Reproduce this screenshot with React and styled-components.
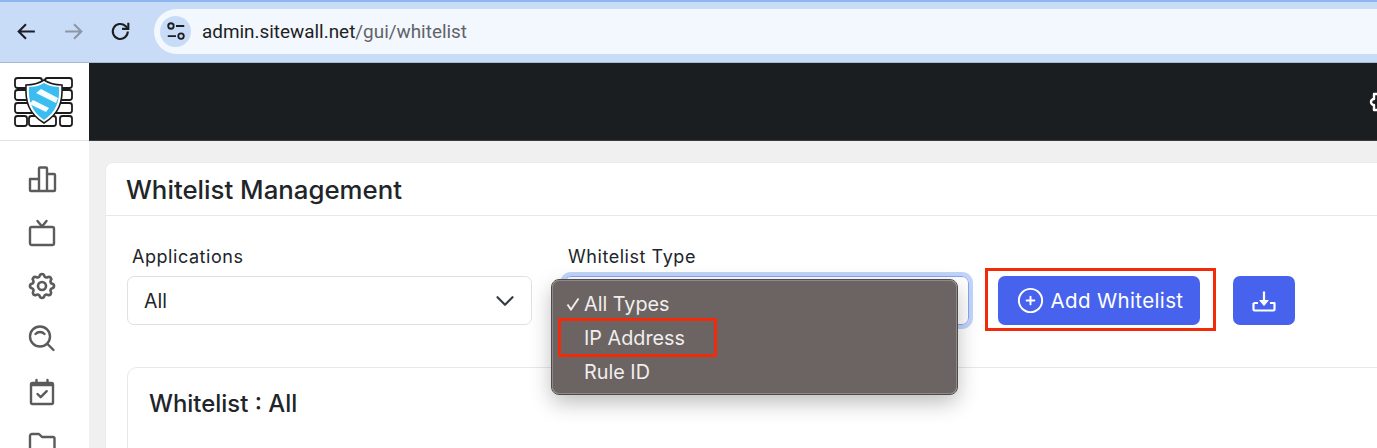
import React from "react";
import styled, { createGlobalStyle } from "styled-components";
import { TbSettings, TbCirclePlus, TbChevronDown } from "react-icons/tb";

const Global = createGlobalStyle`
  html, body { margin: 0; padding: 0; height: 448px; overflow: hidden; background: #fff; }
  * { box-sizing: border-box; }
  body { font-family: Inter, "Liberation Sans", sans-serif; color: #212529; }
`;

const Page = styled.div`
  width: 1377px;
  height: 448px;
  overflow: hidden;
  display: flex;
  flex-direction: column;
  position: relative;
`;

const BrowserBar = styled.div`
  height: 63px;
  flex: none;
  background: #c8dcf8;
  border-top: 2px solid #8fb6ee;
  border-bottom: 1px solid #a9b9d2;
  display: flex;
  align-items: center;
  padding-left: 14px;
  padding-bottom: 2px;
`;

const NavButton = styled.div`
  width: 25px;
  height: 25px;
  margin-right: ${(p) => p.$gap}px;
  color: ${(p) => (p.$muted ? "#8c96a6" : "#1c1e21")};
  display: flex;
`;

const UrlBar = styled.div`
  flex: 1;
  height: 45px;
  margin-right: -30px;
  border-radius: 23px;
  background: #f3f7fe;
  display: flex;
  align-items: center;
  padding-left: 6px;
  font-family: Roboto, Inter, sans-serif;
  font-size: 18.9px;
`;

const TuneBadge = styled.div`
  width: 31px;
  height: 31px;
  border-radius: 50%;
  background: #c8dcf8;
  color: #1c1e21;
  display: flex;
  align-items: center;
  justify-content: center;
  margin-right: 11px;
`;

const Host = styled.span`
  color: #1d1f22;
`;
const UrlPath = styled.span`
  color: #5f6368;
`;

const TopRow = styled.div`
  height: 78px;
  flex: none;
  display: flex;
`;

const LogoBox = styled.div`
  width: 89px;
  flex: none;
  background: #fff;
  border-bottom: 1px solid #e3e3e3;
  display: flex;
  align-items: center;
  justify-content: center;
  padding-right: 2px;
`;

const Navbar = styled.div`
  flex: 1;
  background: #1a1e21;
  border-bottom: 1px solid #3a3c3e;
  display: flex;
  align-items: center;
  justify-content: flex-end;
  color: #fff;
  overflow: hidden;
`;

const CornerIcon = styled.svg`
  width: 24px;
  height: 24px;
  flex: none;
  margin-right: -16px;
`;

const Body = styled.div`
  flex: 1;
  display: flex;
  min-height: 0;
`;

const Sidebar = styled.div`
  width: 89px;
  flex: none;
  background: #fff;
  display: flex;
  flex-direction: column;
  align-items: center;
  padding: 19px 6px 0 0;
  gap: 13px;
  color: #5b5b5b;
`;

const SideIcon = styled.div`
  width: 40px;
  height: 40px;
  display: flex;
  align-items: center;
  justify-content: center;
  flex: none;
`;

const Main = styled.div`
  flex: 1;
  background: #f0f0f0;
  padding: 21px 0 0 16px;
  min-width: 0;
`;

const Card = styled.div`
  width: 1400px;
  height: 400px;
  background: #fff;
  border: 1px solid #e9ebee;
  border-radius: 8px;
`;

const CardHeader = styled.div`
  height: 53px;
  border-bottom: 1px solid #e6e8ec;
  padding: 9px 0 0 20px;
`;

const Title = styled.h1`
  margin: 0;
  font-size: 25.8px;
  line-height: 36px;
  font-weight: 500;
  color: #212529;
`;

const CardBody = styled.div`
  padding: 28px 0 0 21px;
`;

const Form = styled.div`
  display: flex;
  align-items: flex-end;
`;

const Field = styled.div`
  width: 405px;
  margin-right: ${(p) => p.$gap}px;
  display: flex;
  flex-direction: column;
`;

const Label = styled.label`
  font-size: 18px;
  line-height: 26px;
  letter-spacing: 0.55px;
  padding-left: ${(p) => p.$inset}px;
  margin-bottom: 6px;
  color: #212529;
`;

const Select = styled.div`
  height: 49px;
  border: 1px solid #dee2e6;
  border-radius: 7px;
  background: #fff;
  display: flex;
  align-items: center;
  justify-content: space-between;
  padding: 0 11px 0 16px;
  font-size: 19.5px;
  outline: ${(p) => (p.$focus ? "4px solid #c1d5fb" : "none")};
  border-color: ${(p) => (p.$focus ? "#86a5f5" : "#dee2e6")};
  color: #212529;
`;

const PrimaryButton = styled.div`
  height: 49px;
  background: #4763ee;
  color: #fff;
  border-radius: 7px;
  display: flex;
  align-items: center;
  justify-content: center;
  gap: 5px;
  font-size: 20.5px;
  letter-spacing: 0.35px;
  width: ${(p) => p.$w}px;
  margin-right: ${(p) => p.$gap || 0}px;
  flex: none;
`;

const InnerCard = styled.div`
  margin-top: 42px;
  width: 1300px;
  height: 200px;
  border: 1px solid #e6e8ec;
  border-radius: 10px;
  padding: 18px 0 0 21px;
`;

const InnerTitle = styled.h2`
  margin: 0;
  font-size: 23.9px;
  line-height: 36px;
  font-weight: 500;
  color: #212529;
`;

const Menu = styled.div`
  position: absolute;
  left: 552px;
  top: 280px;
  width: 405px;
  height: 114px;
  padding: 6px 0 0 13px;
  background: #6b6462;
  border: 1px solid #8e8a88;
  outline: 1px solid #4f4b4a;
  border-radius: 7px;
  box-shadow: 0 8px 22px rgba(0, 0, 0, 0.28);
  color: #f1eeed;
  font-size: 19.8px;
`;

const MenuItem = styled.div`
  height: 34px;
  display: flex;
  align-items: center;
`;

const Check = styled.span`
  width: 18px;
  flex: none;
  display: flex;
  align-items: center;
`;

const RedBox = styled.div`
  position: absolute;
  left: ${(p) => p.$x}px;
  top: ${(p) => p.$y}px;
  width: ${(p) => p.$w}px;
  height: ${(p) => p.$h}px;
  border: 3px solid #f32a0a;
  pointer-events: none;
`;

const Logo = () => (
  <svg width="60" height="52" viewBox="0 0 60 52">
    <g fill="#fff" stroke="#1b1b1b" strokeWidth="1.8">
      <rect x="1" y="2" width="27" height="10" rx="2.5" />
      <rect x="31" y="2" width="27" height="10" rx="2.5" />
      <rect x="1" y="14" width="14" height="10" rx="2.5" />
      <rect x="44" y="14" width="14" height="10" rx="2.5" />
      <rect x="1" y="27" width="27" height="10" rx="2.5" />
      <rect x="31" y="27" width="27" height="10" rx="2.5" />
      <rect x="1" y="40" width="12" height="10" rx="2.5" />
      <rect x="15" y="40" width="27" height="10" rx="2.5" />
      <rect x="46" y="40" width="12" height="10" rx="2.5" />
    </g>
    <path d="M30 4 C36 8 42 9 48 9 C49 26 45 38 30 47 C15 38 11 26 12 9 C18 9 24 8 30 4 Z" fill="#fff" stroke="#1b1b1b" strokeWidth="1.6" />
    <path d="M30 7 C35 10 41 11 45 11 C46 25 42 36 30 44 C18 36 14 25 15 11 C20 11 25 10 30 7 Z" fill="#3bbdf0" />
    <path d="M22 17 L27 13 L44 22 L42 27 Z M15.500 28 L19 24 L35 32 L32 36 Z" fill="#fff" opacity="0.95" />
  </svg>
);

const ArrowLeft = () => (
  <svg viewBox="0 0 24 24" width="25" height="25" fill="none" stroke="currentColor" strokeWidth="2">
    <path d="M20 12H5M11.5 5l-7 7 7 7" />
  </svg>
);
const ArrowRight = () => (
  <svg viewBox="0 0 24 24" width="25" height="25" fill="none" stroke="currentColor" strokeWidth="2">
    <path d="M4 12h15M12.5 5l7 7-7 7" />
  </svg>
);
const Reload = () => (
  <svg viewBox="0 0 24 24" width="25" height="25" fill="none" stroke="currentColor" strokeWidth="2">
    <path d="M19 12a7.2 7.2 0 1 1-2.2-5.2L19 9" />
    <path d="M19.5 3.5V9.5H13.5" fill="none" />
  </svg>
);
const Tune = () => (
  <svg viewBox="0 0 24 24" width="22" height="22" fill="none" stroke="currentColor" strokeWidth="2">
    <circle cx="6.5" cy="6.5" r="3" />
    <path d="M12 6.5h9M3 17.5h9" />
    <circle cx="17.5" cy="17.5" r="3" />
  </svg>
);

const iconProps = { width: 30, height: 30, viewBox: "0 0 30 30", fill: "none", stroke: "currentColor", strokeWidth: 2.4, strokeLinejoin: "round", strokeLinecap: "round" };

const BarsIcon = () => (
  <svg {...iconProps}>
    <path d="M3 14h9v12H4a1 1 0 0 1-1-1zM12 3.500a1 1 0 0 1 1-1h6a1 1 0 0 1 1 1V26h-8zM20 9h7a1 1 0 0 1 1 1v15a1 1 0 0 1-1 1h-7z" />
  </svg>
);
const TvIcon = () => (
  <svg {...iconProps}>
    <rect x="3" y="9" width="24" height="18" rx="1.800" />
    <path d="M10.500 3l4.500 5.500L19.500 3" />
  </svg>
);
const SearchIcon = () => (
  <svg {...iconProps}>
    <circle cx="13" cy="12.500" r="10" />
    <path d="M8.500 10c2.500-2.600 6.500-2.600 9 0M20.500 20l6 6" />
  </svg>
);
const CalendarIcon = () => (
  <svg {...iconProps}>
    <rect x="4" y="6" width="22" height="21" rx="1.500" />
    <path d="M4 7.500h22" strokeWidth="3.500" strokeLinecap="butt" />
    <path d="M9.500 3v3M20.500 3v3" />
    <path d="M10.500 17l3.200 3.200 6-6" />
  </svg>
);
const FolderIcon = () => (
  <svg {...iconProps}>
    <path d="M3 6a2 2 0 0 1 2-2h7l3 3h11a1.500 1.500 0 0 1 1.500 1.500V26a1.500 1.500 0 0 1-1.500 1.500H4.500A1.500 1.500 0 0 1 3 26z" />
  </svg>
);
const DownloadIcon = () => (
  <svg width="26" height="26" viewBox="0 0 26 26" fill="none" stroke="currentColor" strokeWidth="2.200" strokeLinejoin="round">
    <path d="M2.500 15v6.500a1 1 0 0 0 1 1h19a1 1 0 0 0 1-1V15H19M7 15H2.500" />
    <path d="M13 3.500V14" />
    <path d="M8.800 12.500h8.400L13 17.500z" fill="currentColor" strokeWidth="1" />
  </svg>
);
const CheckMark = () => (
  <svg width="14" height="14" viewBox="0 0 14 14" fill="none" stroke="currentColor" strokeWidth="1.900">
    <path d="M1.500 7.500l3.500 5L12.500 1.500" />
  </svg>
);

export default function App() {
  return (
    <Page>
      <Global />
      <BrowserBar>
        <NavButton $gap={22}><ArrowLeft /></NavButton>
        <NavButton $gap={22} $muted><ArrowRight /></NavButton>
        <NavButton $gap={21}><Reload /></NavButton>
        <UrlBar>
          <TuneBadge><Tune /></TuneBadge>
          <Host>admin.sitewall.net</Host>
          <UrlPath>/gui/whitelist</UrlPath>
        </UrlBar>
      </BrowserBar>
      <TopRow>
        <LogoBox><Logo /></LogoBox>
        <Navbar>
          <CornerIcon viewBox="0 0 24 24" fill="none" stroke="currentColor" strokeWidth="2.4" strokeLinejoin="round">
            <path d="M5 4h4a3 3 0 0 0 6 0h4v5a3 3 0 0 0 0 6v5h-4a3 3 0 0 0-6 0H5v-5a3 3 0 0 1 0-6z" />
          </CornerIcon>
        </Navbar>
      </TopRow>
      <Body>
        <Sidebar>
          <SideIcon><BarsIcon /></SideIcon>
          <SideIcon><TvIcon /></SideIcon>
          <SideIcon><TbSettings size={32} /></SideIcon>
          <SideIcon><SearchIcon /></SideIcon>
          <SideIcon><CalendarIcon /></SideIcon>
          <SideIcon><FolderIcon /></SideIcon>
        </Sidebar>
        <Main>
          <Card>
            <CardHeader><Title>Whitelist Management</Title></CardHeader>
            <CardBody>
              <Form>
                <Field $gap={32}>
                  <Label $inset={5}>Applications</Label>
                  <Select>All <TbChevronDown size={30} strokeWidth={1.7} color="#343a40" /></Select>
                </Field>
                <Field $gap={29}>
                  <Label $inset={4}>Whitelist Type</Label>
                  <Select $focus />
                </Field>
                <PrimaryButton $w={202} $gap={33}><TbCirclePlus size={31} strokeWidth={1.5} /> Add Whitelist</PrimaryButton>
                <PrimaryButton $w={62}><DownloadIcon /></PrimaryButton>
              </Form>
              <InnerCard><InnerTitle>Whitelist : All</InnerTitle></InnerCard>
            </CardBody>
          </Card>
        </Main>
      </Body>
      <Menu>
        <MenuItem><Check><CheckMark /></Check>All Types</MenuItem>
        <MenuItem><Check />IP Address</MenuItem>
        <MenuItem><Check />Rule ID</MenuItem>
      </Menu>
      <RedBox $x={558} $y={318} $w={159} $h={39} />
      <RedBox $x={985} $y={268} $w={231} $h={63} />
    </Page>
  );
}
